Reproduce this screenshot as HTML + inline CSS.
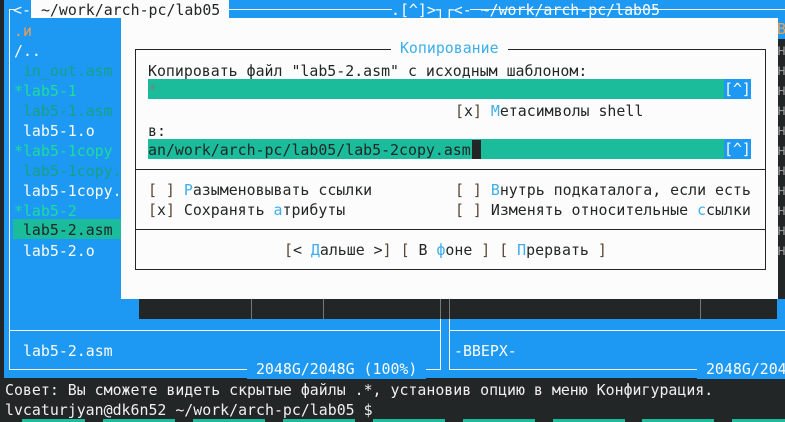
<!DOCTYPE html>
<html><head><meta charset="utf-8">
<style>
*{margin:0;padding:0;box-sizing:border-box}
html,body{width:785px;height:422px;overflow:hidden}
body{background:#232627;position:relative;font-family:"DejaVu Sans Mono","Liberation Mono",monospace}
#s{position:absolute;left:0;top:0;width:785px;height:422px;overflow:hidden}
.a{position:absolute}
.t{position:absolute;font-size:14.9px;line-height:20px;white-space:pre;height:20px}
.hl{position:absolute;height:1px;background:#fcfcfc}
.vl{position:absolute;width:1px;background:#fcfcfc}
.dl{position:absolute;background:#232627}
.w{color:#fcfcfc}.d{color:#232627}.k{color:#3daee9}.b{color:#5a4632}
.g1{color:#16a085}.g2{color:#1cdc9a}
</style></head><body><div id="s">
<div class="a" style="left:4px;top:0;width:781px;height:378px;background:#1d99f3"></div>
<div class="hl" style="left:9px;top:9px;width:5px"></div>
<div class="hl" style="left:229px;top:9px;width:163px"></div>
<div class="hl" style="left:470px;top:9px;width:315px"></div>
<div class="t w" style="left:13px;top:0px">&lt;-</div>
<div class="a" style="left:31px;top:0;width:198px;height:18px;background:#fcfcfc"></div>
<div class="t d" style="left:32px;top:0px"> ~/work/arch-pc/lab05</div>
<div class="t w" style="left:391px;top:0px">.[^]&gt;┐┌&lt;- ~/work/arch-pc/lab05</div>
<div class="vl" style="left:9px;top:9px;height:361px"></div>
<div class="vl" style="left:440px;top:9px;height:361px"></div>
<div class="vl" style="left:449px;top:9px;height:361px"></div>
<div class="hl" style="left:9px;top:330px;width:432px"></div>
<div class="hl" style="left:449px;top:330px;width:336px"></div>
<div class="hl" style="left:9px;top:369px;width:432px"></div>
<div class="hl" style="left:449px;top:369px;width:336px"></div>
<div class="t w" style="left:23px;top:341px">lab5-2.asm</div>
<div class="t w" style="left:454px;top:341px">-BBEPX-</div>
<div class="t w" style="left:247px;top:359px;background:#1d99f3"> 2048G/2048G (100%) </div>
<div class="a" style="left:697px;top:359px;width:88px;height:20px;overflow:hidden"><div class="t w" style="left:0;top:0;background:#1d99f3"> 2048G/2048G (100%) </div></div>
<div class="t" style="left:14px;top:21px;color:#f0a050">.и</div>
<div class="t w" style="left:14px;top:41px">/..</div>
<div class="t g1" style="left:14px;top:61px"> in_out.asm</div>
<div class="t g2" style="left:14px;top:81px">*lab5-1</div>
<div class="t g1" style="left:14px;top:101px"> lab5-1.asm</div>
<div class="t w" style="left:14px;top:121px"> lab5-1.o</div>
<div class="t g2" style="left:14px;top:141px">*lab5-1copy</div>
<div class="t g1" style="left:14px;top:161px"> lab5-1copy.</div>
<div class="t w" style="left:14px;top:181px"> lab5-1copy.</div>
<div class="t g2" style="left:14px;top:201px">*lab5-2</div>
<div class="a" style="left:13px;top:219px;width:110px;height:20px;background:#1abc9c"></div>
<div class="t d" style="left:14px;top:220px"> lab5-2.asm</div>
<div class="t w" style="left:14px;top:241px"> lab5-2.o</div>
<div class="a" style="left:778px;top:39px;width:7px;height:260px;background:#232627;overflow:hidden">
<div class="t" style="left:-1px;top:1px;color:#9a9a9a;height:260px">н<br>н<br>н<br>н<br>н<br>н<br>н<br>н<br>н<br>н<br>н</div></div>
<div class="a" style="left:778px;top:18px;width:7px;height:21px;overflow:hidden"><div class="t" style="left:-1px;top:1px;color:#f0a050">B</div></div>
<div class="a" style="left:139px;top:299px;width:638px;height:20px;background:#232627"></div>
<div class="a" style="left:251px;top:299px;width:1px;height:20px;background:#777"></div>
<div class="a" style="left:323px;top:299px;width:1px;height:20px;background:#777"></div>
<div class="a" style="left:440px;top:299px;width:1px;height:20px;background:#777"></div>
<div class="a" style="left:449px;top:299px;width:1px;height:20px;background:#777"></div>
<div class="a" style="left:700px;top:299px;width:1px;height:20px;background:#777"></div>
<div class="a" style="left:121px;top:18px;width:657px;height:281px;background:#fcfcfc"></div>
<div class="a" style="left:135px;top:49px;width:631px;height:221px;border:1px solid #232627"></div>
<div class="dl" style="left:135px;top:169px;width:631px;height:1px"></div>
<div class="dl" style="left:135px;top:229px;width:631px;height:1px"></div>
<div class="t k" style="left:391px;top:38px;background:#fcfcfc"> Копирование </div>
<div class="t d" style="left:148px;top:61px">Копировать файл "lab5-2.asm" с исходным шаблоном:</div>
<div class="a" style="left:148px;top:79px;width:577px;height:20px;background:#1abc9c"></div>
<div class="t" style="left:148px;top:80px;color:#6a8a80">*</div>
<div class="t w" style="left:724px;top:79px;background:#1d99f3;width:27px;line-height:21px">[^]</div>
<div class="t d" style="left:455px;top:101px"><span class="b">[</span>x<span class="b">]</span> <span class="k">М</span>етасимволы shell</div>
<div class="t d" style="left:148px;top:121px">в:</div>
<div class="a" style="left:148px;top:139px;width:577px;height:20px;background:#1abc9c"></div>
<div class="t d" style="left:148px;top:140px">an/work/arch-pc/lab05/lab5-2copy.asm</div>
<div class="a" style="left:472px;top:140px;width:9px;height:19px;background:#232627"></div>
<div class="t w" style="left:724px;top:139px;background:#1d99f3;width:27px;line-height:21px">[^]</div>
<div class="t d" style="left:148px;top:180px"><span class="b">[ ]</span> <span class="k">Р</span>азыменовывать ссылки</div>
<div class="t d" style="left:148px;top:200px"><span class="b">[</span>x<span class="b">]</span> Сохранять <span class="k">а</span>трибуты</div>
<div class="t d" style="left:455px;top:180px"><span class="b">[ ]</span> <span class="k">В</span>нутрь подкаталога, если есть</div>
<div class="t d" style="left:455px;top:200px"><span class="b">[ ]</span> Изменять относительные <span class="k">с</span>сылки</div>
<div class="t d" style="left:284px;top:240px"><span class="b">[</span>&lt; <span class="k">Д</span>альше &gt;<span class="b">]</span> <span class="b">[</span> В <span class="k">ф</span>оне <span class="b">]</span> <span class="b">[</span> <span class="k">П</span>рервать <span class="b">]</span></div>
<div class="t" style="left:5px;top:380px;color:#eff0f1">Совет: Вы сможете видеть скрытые файлы .*, установив опцию в меню Конфигурация.</div>
<div class="t" style="left:5px;top:400px;color:#eff0f1">lvcaturjyan@dk6n52 ~/work/arch-pc/lab05 $</div>
<div class="a" style="left:22px;top:419px;width:63px;height:3px;background:#1abc9c"></div>
<div class="a" style="left:103px;top:419px;width:72px;height:3px;background:#1abc9c"></div>
<div class="a" style="left:193px;top:419px;width:72px;height:3px;background:#1abc9c"></div>
<div class="a" style="left:283px;top:419px;width:72px;height:3px;background:#1abc9c"></div>
<div class="a" style="left:373px;top:419px;width:72px;height:3px;background:#1abc9c"></div>
<div class="a" style="left:463px;top:419px;width:72px;height:3px;background:#1abc9c"></div>
<div class="a" style="left:553px;top:419px;width:72px;height:3px;background:#1abc9c"></div>
<div class="a" style="left:642px;top:419px;width:72px;height:3px;background:#1abc9c"></div>
<div class="a" style="left:732px;top:419px;width:53px;height:3px;background:#1abc9c"></div>
</div></body></html>
